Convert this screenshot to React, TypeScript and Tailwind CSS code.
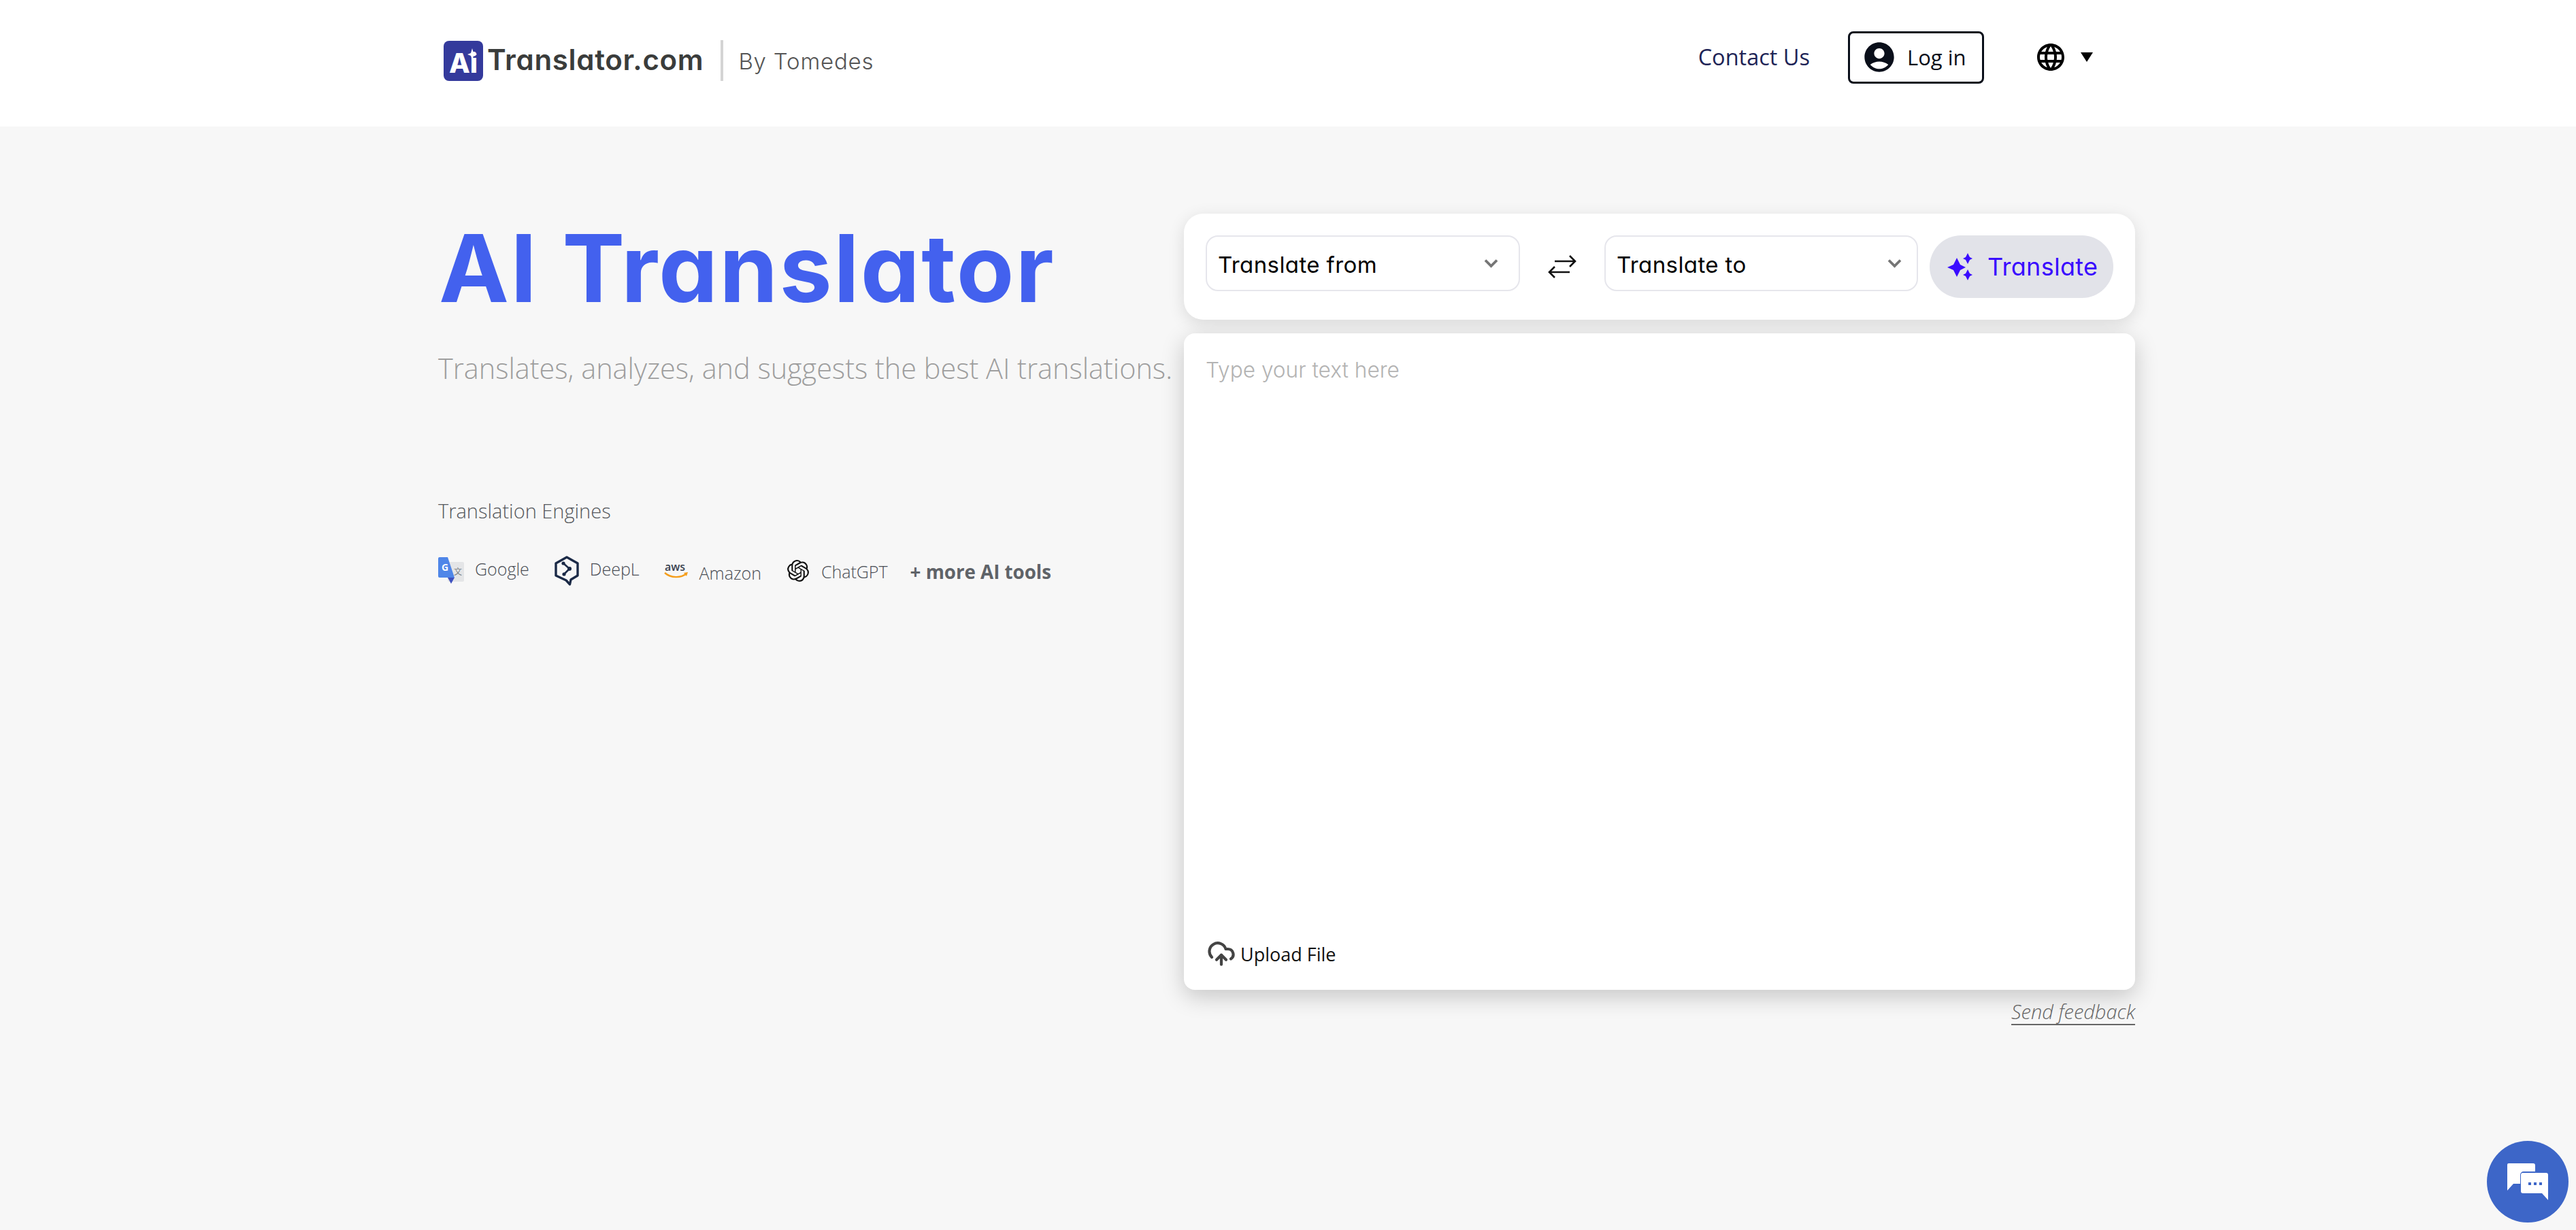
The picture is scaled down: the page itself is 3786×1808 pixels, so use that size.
import React from "react";
import { MdAccountCircle, MdLanguage } from "react-icons/md";
import { SiOpenai } from "react-icons/si";
import { CloudUpload } from "lucide-react";

const geo = "font-['Inter',sans-serif] [font-feature-settings:'cv11']";
const open = "font-['Open_Sans',sans-serif]";

function Chevron() {
  return (
    <svg width="21" height="14" viewBox="0 0 21 14" className="shrink-0">
      <path d="M2 2.5 L10.5 11 L19 2.5" fill="none" stroke="#757575" strokeWidth="3.8" />
    </svg>
  );
}

function Select({ label, width, pad }: { label: string; width: string; pad: string }) {
  return (
    <div className={`${width} ${pad} h-[82px] flex items-center justify-between pl-[16px] border-2 border-[#e6e6ec] rounded-[18px] bg-white`}>
      <span className={`${geo} mt-[4px] text-[33px] leading-none text-black tracking-[0.4px]`}>{label}</span>
      <Chevron />
    </div>
  );
}

function GoogleIcon() {
  return (
    <svg width="38" height="40" viewBox="0 0 38 40" className="shrink-0">
      <rect x="14" y="7" width="24" height="29" rx="2" fill="#e4e5e7" />
      <path d="M2 0 H14 L24 30 H2 a2 2 0 0 1 -2 -2 V2 a2 2 0 0 1 2 -2z" fill="#4f86e8" />
      <path d="M14 30 H24 L19 39z" fill="#3f51c0" />
      <text x="5" y="20" fontSize="14" fontWeight="700" fill="#fff" fontFamily="Open Sans">G</text>
      <text x="23" y="26" fontSize="12" fill="#7b7f85" fontFamily="Noto Sans CJK SC">文</text>
    </svg>
  );
}

function DeepLIcon() {
  return (
    <svg width="36" height="44" viewBox="0 0 36 44" className="shrink-0">
      <path d="M18 2 L34 11 V29 L24 35 L22.5 42 L17 36 L2 29 V11z" fill="none" stroke="#1b2a47" strokeWidth="3.4" strokeLinejoin="round" />
      <path d="M13 11 L22 19 L14 27" fill="none" stroke="#1b2a47" strokeWidth="2.6" />
      <circle cx="13" cy="11" r="2.6" fill="#1b2a47" />
      <circle cx="22" cy="19" r="3" fill="#1b2a47" />
      <circle cx="14" cy="27" r="2.6" fill="#1b2a47" />
    </svg>
  );
}

function AwsIcon() {
  return (
    <svg width="36" height="30" viewBox="0 0 36 30" className="shrink-0 mt-[-6px]">
      <text x="1" y="18" fontSize="16" fontWeight="600" fill="#3a4350" fontFamily="Open Sans">aws</text>
      <path d="M1 21 C10 29 25 29 33 22" fill="none" stroke="#f59e1c" strokeWidth="2.4" />
      <path d="M29 21 L35 20 L33 26" fill="#f59e1c" />
    </svg>
  );
}

function Engine({ icon, name, gap, mb }: { icon: React.ReactNode; name: string; gap: string; mb: string }) {
  return (
    <div className={`flex items-center ${gap}`}>
      {icon}
      <span className={`${open} text-[25px] leading-none text-[#4a4e55] font-light ${mb}`}>{name}</span>
    </div>
  );
}

export default function App() {
  return (
    <div className="relative min-h-screen w-full bg-[#f7f7f7] overflow-hidden">
      <header className="h-[186px] bg-white flex items-center justify-between pl-[652px] pr-[710px]">
        <div className="flex items-center mb-[8px]">
          <div className="relative w-[58px] h-[59px] rounded-[8px] bg-[#343a9c] flex items-end justify-center pb-[9px]">
            <span className={`${geo} [font-feature-settings:normal] text-[40px] leading-[34px] font-extrabold text-white`}>Ai</span>
            <svg width="14" height="18" viewBox="0 0 14 18" className="absolute right-[9px] top-[11px]">
              <path d="M7 0 L9 7 L14 9 L9 11 L7 18 L5 11 L0 9 L5 7z" fill="#fff" />
            </svg>
          </div>
          <span className={`${geo} ml-[6px] mb-[2px] text-[42px] leading-none font-semibold text-[#3a3c3b] tracking-[0.7px]`}>Translator.com</span>
          <div className="ml-[25px] w-[4px] h-[60px] bg-[#d4d4d4]" />
          <span className={`${geo} ml-[22px] mt-[3px] text-[33px] leading-none font-light text-[#555] tracking-[0.8px]`}>By Tomedes</span>
        </div>
        <div className="flex items-center mb-[18px]">
          <span className={`${open} text-[32.5px] leading-none text-[#1e2456]`}>Contact Us</span>
          <div className="ml-[56px] w-[200px] h-[77px] border-[3.5px] border-[#0a0f1a] rounded-[8px] flex items-center pl-[17px]">
            <MdAccountCircle size={52} color="#0a0f1a" />
            <span className={`${open} ml-[15px] text-[31px] leading-none text-[#0a0f1a]`}>Log in</span>
          </div>
          <MdLanguage className="ml-[74px]" size={48} color="#000" />
          <svg width="18" height="14" viewBox="0 0 18 14" className="ml-[20px]">
            <path d="M0 0 H18 L9 14z" fill="#000" />
          </svg>
        </div>
      </header>

      <main className="flex items-start pt-[128px] pl-[644px]">
        <section className="w-[1096px] shrink-0">
          <h1 className={`${geo} mt-[12px] ml-[1px] text-[138px] leading-[136px] font-bold text-[#4361ee] tracking-[2.3px]`}>AI Translator</h1>
          <p className={`${open} mt-[52px] text-[41.4px] leading-[54px] font-light text-[#9e9e9e]`}>Translates, analyzes, and suggests the best AI translations.</p>
          <p className={`${open} mt-[165px] text-[29px] leading-[36px] font-light text-[#55585c]`}>Translation Engines</p>
          <div className="mt-[48px] flex items-center">
            <Engine icon={<GoogleIcon />} name="Google" gap="gap-[16px]" mb="mb-[6px]" />
            <div className="ml-[37px]"><Engine icon={<DeepLIcon />} name="DeepL" gap="gap-[16px]" mb="mb-[6px]" /></div>
            <div className="ml-[36px]"><Engine icon={<AwsIcon />} name="Amazon" gap="gap-[16px]" mb="mb-[-6px]" /></div>
            <div className="ml-[38px]"><Engine icon={<SiOpenai size={32} color="#111" />} name="ChatGPT" gap="gap-[18px]" mb="mb-[-2px]" /></div>
            <span className={`${open} ml-[33px] mb-[-4px] text-[27.7px] leading-none font-bold text-[#5f6368]`}>+ more AI tools</span>
          </div>
        </section>

        <section className="w-[1398px] shrink-0">
          <div className="h-[156px] bg-white rounded-[28px] shadow-[0_6px_24px_rgba(0,0,0,0.12)] flex items-start pt-[32px] pl-[32px]">
            <Select label="Translate from" width="w-[462px]" pad="pr-[30px]" />
            <svg width="42" height="36" viewBox="0 0 42 36" className="ml-[41px] mt-[28px] shrink-0">
              <path d="M10 10 H40 M32 2 L40 10 L32 18" fill="none" stroke="#111" strokeWidth="2.6" />
              <path d="M32 26 H2 M10 18 L2 26 L10 34" fill="none" stroke="#111" strokeWidth="2.6" />
            </svg>
            <div className="ml-[41px]"><Select label="Translate to" width="w-[461px]" pad="pr-[22px]" /></div>
            <div className="ml-[17px] w-[270px] h-[92px] rounded-[46px] bg-[#e2e3e9] flex items-center pl-[26px]">
              <svg width="38" height="40" viewBox="0 0 38 40" className="shrink-0">
                <path d="M14 7 L19 17 L27 21 L19 25 L14 35 L9 25 L0 21 L9 17z" fill="#3a0cff" />
                <path d="M30 0 L33 6 L37 8 L33 10 L30 16 L27 10 L23 8 L27 6z" fill="#3a0cff" />
                <path d="M30 24 L33 30 L37 32 L33 34 L30 40 L27 34 L23 32 L27 30z" fill="#3a0cff" />
              </svg>
              <span className={`${geo} ml-[21px] text-[36px] leading-none text-[#3a0cff] tracking-[0.3px]`}>Translate</span>
            </div>
          </div>

          <div className="mt-[20px] h-[965px] bg-white rounded-[16px] shadow-[0_10px_34px_rgba(0,0,0,0.2)] flex flex-col justify-between pl-[32px] pb-[32px] pt-[36px]">
            <span className={`${geo} text-[31.6px] leading-[36px] font-light text-[#b3b3b3]`}>Type your text here</span>
            <div className="flex items-center">
              <CloudUpload className="ml-[2px]" size={42} color="#444" strokeWidth={2.4} />
              <span className={`${open} ml-[7px] text-[27px] leading-none text-[#111]`}>Upload File</span>
            </div>
          </div>

          <div className="mt-[14px] flex justify-end">
            <span className={`${open} text-[29px] leading-[36px] italic font-light text-[#666] border-b-2 border-[#666]`}>Send feedback</span>
          </div>
        </section>
      </main>

      <div className="absolute left-[3655px] top-[1677px] w-[120px] h-[120px] rounded-full bg-[#3d66c8] flex items-center justify-center">
        <svg width="60" height="54" viewBox="0 0 60 54">
          <path d="M2 0 H38 a3 3 0 0 1 3 3 V12 H24 a5 5 0 0 0 -5 5 V30 H9 L0 40 V2 a2 2 0 0 1 2 -2z" fill="#fff" />
          <path d="M23 14 H57 a3 3 0 0 1 3 3 V54 L51 44 H23 a3 3 0 0 1 -3 -3 V17 a3 3 0 0 1 3 -3z" fill="#fff" />
          <rect x="31" y="28" width="4" height="4" fill="#3d66c8" />
          <rect x="39" y="28" width="4" height="4" fill="#3d66c8" />
          <rect x="47" y="28" width="4" height="4" fill="#3d66c8" />
        </svg>
      </div>
    </div>
  );
}
